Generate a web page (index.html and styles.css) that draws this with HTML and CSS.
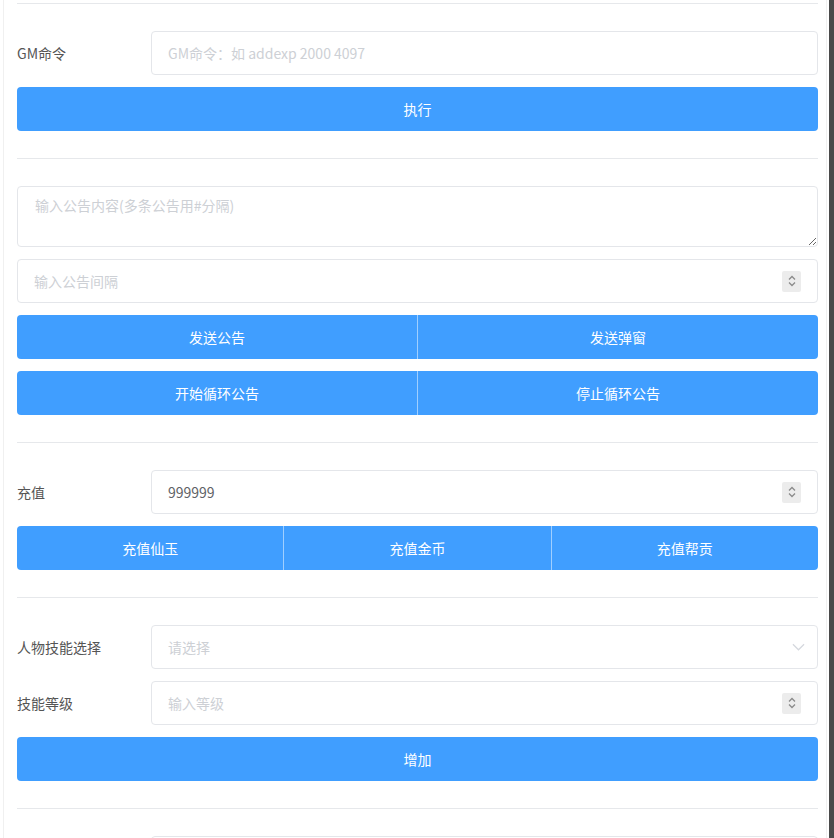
FILE: index.html
```html
<!DOCTYPE html>
<html lang="zh">
<head>
<meta charset="utf-8">
<link rel="stylesheet" href="styles.css">
</head>
<body>
<div class="frame">
  <div class="panel">
    <div class="divider first"></div>

    <section class="section">
      <div class="form-row">
        <label class="label">GM命令</label>
        <div class="field"><input class="input" type="text" placeholder="GM命令：如 addexp 2000 4097"></div>
      </div>
      <button class="btn">执行</button>
    </section>

    <div class="divider"></div>

    <section class="section">
      <textarea class="textarea" placeholder="输入公告内容(多条公告用#分隔)"></textarea>
      <div class="field number solo">
        <input class="input bare" type="text" placeholder="输入公告间隔">
        <span class="spin"><svg viewBox="0 0 10 14" width="10" height="14"><path d="M2 5.5 L5 2.5 L8 5.5 M2 8.5 L5 11.5 L8 8.5" fill="none" stroke="#8a8a8a" stroke-width="1.3"/></svg></span>
      </div>
      <div class="btn-group">
        <button class="btn">发送公告</button>
        <button class="btn">发送弹窗</button>
      </div>
      <div class="btn-group">
        <button class="btn">开始循环公告</button>
        <button class="btn">停止循环公告</button>
      </div>
    </section>

    <div class="divider"></div>

    <section class="section">
      <div class="form-row">
        <label class="label">充值</label>
        <div class="field number">
          <input class="input bare" type="text" value="999999">
          <span class="spin"><svg viewBox="0 0 10 14" width="10" height="14"><path d="M2 5.5 L5 2.5 L8 5.5 M2 8.5 L5 11.5 L8 8.5" fill="none" stroke="#8a8a8a" stroke-width="1.3"/></svg></span>
        </div>
      </div>
      <div class="btn-group">
        <button class="btn">充值仙玉</button>
        <button class="btn">充值金币</button>
        <button class="btn">充值帮贡</button>
      </div>
    </section>

    <div class="divider"></div>

    <section class="section">
      <div class="form-row">
        <label class="label">人物技能选择</label>
        <div class="field select">
          <input class="input bare" type="text" placeholder="请选择" readonly>
          <span class="arrow"><svg viewBox="0 0 14 8" width="13" height="8"><path d="M1 1 L7 7 L13 1" fill="none" stroke="#d5d8de" stroke-width="1.3"/></svg></span>
        </div>
      </div>
      <div class="form-row">
        <label class="label">技能等级</label>
        <div class="field number">
          <input class="input bare" type="text" placeholder="输入等级">
          <span class="spin"><svg viewBox="0 0 10 14" width="10" height="14"><path d="M2 5.5 L5 2.5 L8 5.5 M2 8.5 L5 11.5 L8 8.5" fill="none" stroke="#8a8a8a" stroke-width="1.3"/></svg></span>
        </div>
      </div>
      <button class="btn">增加</button>
    </section>

    <div class="divider"></div>

    <section class="section">
      <div class="form-row">
        <label class="label"></label>
        <div class="field"><input class="input" type="text"></div>
      </div>
    </section>
  </div>
  <div class="scrollbar"></div>
</div>
</body>
</html>
```
FILE: styles.css
```css
* { box-sizing: border-box; }
html, body {
  margin: 0;
  padding: 0;
  background: #ffffff;
  overflow: hidden;
}
body {
  font-family: "Noto Sans CJK SC", "Noto Sans", sans-serif;
  font-size: 14px;
  color: #606266;
}
.frame {
  display: flex;
  width: 834px;
  height: 838px;
  overflow: hidden;
}
.panel {
  flex: 1;
  min-width: 0;
  margin-left: 3px;
  border-left: 1px solid #f0f0f0;
  border-right: 1px solid #f0f0f0;
  padding: 0 8px 0 13px;
  margin-right: 2px;
}
.scrollbar {
  width: 5px;
  flex: none;
  background: #4a4a4a;
}
.divider {
  height: 1px;
  background: #e6e8eb;
  margin: 27px 0 27px 0;
}
.divider.first {
  margin-top: 3px;
}
.section {
  display: flex;
  flex-direction: column;
  gap: 12px;
}
.form-row {
  display: flex;
  align-items: center;
  height: 44px;
}
.label {
  width: 134px;
  flex: none;
  color: #555;
  font-size: 14px;
}
.field {
  flex: 1;
  min-width: 0;
  height: 44px;
  border: 1px solid #e4e6ea;
  border-radius: 4px;
  display: flex;
  align-items: center;
  background: #fff;
}
.field.solo {
  flex: none;
}
.input {
  width: 100%;
  height: 100%;
  border: none;
  outline: none;
  background: transparent;
  padding: 0 16px;
  font-family: inherit;
  font-size: 14px;
  color: #606266;
}
.input::placeholder, .textarea::placeholder {
  color: #cdd0d5;
}
.bare { flex: 1; min-width: 0; }
.spin {
  flex: none;
  width: 19px;
  height: 21px;
  margin-right: 16px;
  background: #ececec;
  border-radius: 2px;
  display: flex;
  align-items: center;
  justify-content: center;
}
.arrow {
  flex: none;
  margin-right: 12px;
  display: flex;
  align-items: center;
}
.textarea {
  display: block;
  width: 100%;
  height: 61px;
  border: 1px solid #e4e6ea;
  border-radius: 4px;
  padding: 8px 17px;
  font-family: inherit;
  font-size: 14px;
  color: #606266;
  resize: vertical;
  outline: none;
}
.btn {
  height: 44px;
  width: 100%;
  border: none;
  border-radius: 4px;
  background: #409eff;
  color: #fff;
  font-family: inherit;
  font-size: 14px;
  padding: 0;
  margin: 0;
}
.btn-group {
  display: flex;
}
.btn-group .btn {
  flex: 1;
  border-radius: 0;
  border-left: 1px solid rgba(255, 255, 255, 0.5);
}
.btn-group .btn:first-child {
  border-left: none;
  border-radius: 4px 0 0 4px;
}
.btn-group .btn:last-child {
  border-radius: 0 4px 4px 0;
}
```
